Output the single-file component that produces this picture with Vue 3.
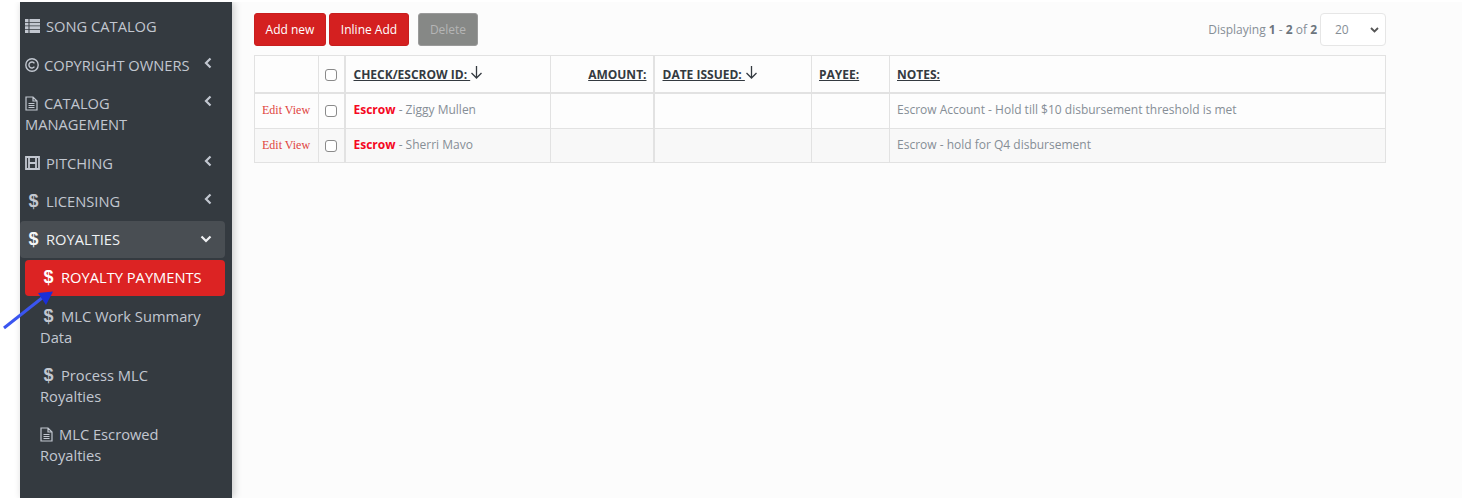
<template>
  <div class="page">
    <aside class="sidebar">
      <div v-for="item in navTop" :key="item.label" class="nav">
        <span class="label">
          <svg v-if="item.icon === 'list'" class="ic wide" width="15" height="14" viewBox="0 0 15 14"><path d="M0 0h3.500v3H0zM4.500 0H15v3H4.500zM0 3.700h3.500v2.800H0zM4.500 3.700H15v2.800H4.500zM0 7.200h3.500V10H0zM4.500 7.200H15V10H4.500zM0 10.800h3.500V14H0zM4.500 10.800H15V14H4.500z" fill="#c2c7d0"/></svg>
          <svg v-else-if="item.icon === 'copy'" class="ic" width="14" height="14" viewBox="0 0 14 14"><circle cx="7" cy="7" r="6.200" fill="none" stroke="#c2c7d0" stroke-width="1.400"/><path d="M9.400 5.300A3 3 0 1 0 9.400 8.700" fill="none" stroke="#c2c7d0" stroke-width="1.400"/></svg>
          <svg v-else-if="item.icon === 'file'" class="ic fileic" width="13" height="15" viewBox="0 0 13 15"><path d="M1 1h7l4 4v9H1zM8 1v4h4M3.500 7.500h6M3.500 9.500h6M3.500 11.500h6" fill="none" stroke="#c2c7d0" stroke-width="1.200"/></svg>
          <svg v-else-if="item.icon === 'film'" class="ic wide" width="15" height="14" viewBox="0 0 15 14"><path d="M1 1h13v12H1zM4 1v12M11 1v12M4 7h7" fill="none" stroke="#c2c7d0" stroke-width="1.800"/></svg>
          <span v-else class="dollar">$</span>
          <span>{{ item.label }}</span>
        </span>
        <svg v-if="item.arrow" class="chev" width="8" height="12" viewBox="0 0 8 12"><path d="M6.500 1.500 2 6l4.500 4.500" fill="none" stroke="#c2c7d0" stroke-width="2.200"/></svg>
      </div>
      <div class="nav open">
        <span class="label"><span class="dollar">$</span><span>ROYALTIES</span></span>
        <svg class="down" width="12" height="8" viewBox="0 0 12 8"><path d="M1.500 1.500 6 6l4.500-4.500" fill="none" stroke="#f0f1f3" stroke-width="2.200"/></svg>
      </div>
      <div class="sub active"><span class="dollar">$</span><span>ROYALTY PAYMENTS</span></div>
      <div class="sub"><span class="dollar">$</span><span>MLC Work Summary Data</span></div>
      <div class="sub"><span class="dollar">$</span><span>Process MLC Royalties</span></div>
      <div class="sub"><svg class="ic subfile" width="13" height="15" viewBox="0 0 13 15"><path d="M1 1h7l4 4v9H1zM8 1v4h4M3.500 7.500h6M3.500 9.500h6M3.500 11.500h6" fill="none" stroke="#c2c7d0" stroke-width="1.200"/></svg><span>MLC Escrowed Royalties</span></div>
    </aside>

    <main class="main">
      <div class="toolbar">
        <div class="buttons">
          <button class="btn red">Add new</button>
          <button class="btn red">Inline Add</button>
          <button class="btn gray">Delete</button>
        </div>
        <div class="paging">
          <span>Displaying <b>1</b> - <b>2</b> of <b>2</b></span>
          <div class="select"><span>20</span><svg width="9" height="6" viewBox="0 0 9 6"><path d="M1 1l3.500 3.500L8 1" fill="none" stroke="#555" stroke-width="1.800"/></svg></div>
        </div>
      </div>
      <table class="grid">
        <colgroup>
          <col class="c1"><col class="c2"><col class="c3"><col class="c4"><col class="c5"><col class="c6"><col>
        </colgroup>
        <thead>
          <tr>
            <th></th>
            <th class="ck thick"><span class="box"></span></th>
            <th class="after"><span class="head">CHECK/ESCROW ID: <svg width="13" height="13" viewBox="0 0 13 13"><path d="M6.500 0v12M1.500 7l5 5 5-5" fill="none" stroke="#343a40" stroke-width="1.300"/></svg></span></th>
            <th class="right thick"><span class="head">AMOUNT:</span></th>
            <th class="after"><span class="head">DATE ISSUED: <svg width="13" height="13" viewBox="0 0 13 13"><path d="M6.500 0v12M1.500 7l5 5 5-5" fill="none" stroke="#343a40" stroke-width="1.300"/></svg></span></th>
            <th><span class="head">PAYEE:</span></th>
            <th><span class="head">NOTES:</span></th>
          </tr>
        </thead>
        <tbody>
          <tr v-for="row in rows" :key="row.name">
            <td class="links">Edit View</td>
            <td class="ck thick"><span class="box"></span></td>
            <td class="after"><b class="esc">Escrow</b> - {{ row.name }}</td>
            <td class="thick"></td>
            <td></td>
            <td></td>
            <td>{{ row.notes }}</td>
          </tr>
        </tbody>
      </table>
    </main>

    <svg class="pointer" width="56" height="44" viewBox="0 0 56 44"><path d="M4 41 42 11" stroke="#3a55f0" stroke-width="3" fill="none"/><path d="M53 4.500 38 6l8 12z" fill="#1a2fd8"/></svg>
  </div>
</template>

<script setup>
const navTop = [
  { label: 'SONG CATALOG', icon: 'list' },
  { label: 'COPYRIGHT OWNERS', icon: 'copy', arrow: true },
  { label: 'CATALOG MANAGEMENT', icon: 'file', arrow: true },
  { label: 'PITCHING', icon: 'film', arrow: true },
  { label: 'LICENSING', icon: 'dollarTxt', arrow: true }
]
const rows = [
  { name: 'Ziggy Mullen', notes: 'Escrow Account - Hold till $10 disbursement threshold is met' },
  { name: 'Sherri Mavo', notes: 'Escrow - hold for Q4 disbursement' }
]
</script>

<style>
html, body { margin: 0; background: #fff; }
</style>

<style scoped>
.page {
  position: relative;
  display: flex;
  height: 496px;
  margin-top: 2px;
  padding-left: 20px;
  overflow: hidden;
  font-family: "Open Sans", "Noto Sans", sans-serif;
  font-size: 14px;
  color: #6c757d;
}
.sidebar {
  box-sizing: border-box;
  width: 212px;
  flex: none;
  background: #343a40;
  padding: 6.400px 7px 0 0;
  box-shadow: 2px 0 8px rgba(0, 0, 0, .2);
  z-index: 1;
  color: #c2c7d0;
  font-size: 14.7px;
}
.nav {
  position: relative;
  padding: 8px 30px 8px 5px;
  line-height: 21px;
  margin-bottom: 1.400px;
  border-radius: 4px;
}
.nav .label { display: block; }
.ic { vertical-align: -1px; margin-right: 5px; }
.ic.wide { margin-right: 6px; }
.ic.fileic { margin-right: 6px; vertical-align: -2px; }
.dollar {
  display: inline-block;
  width: 17px;
  text-align: center;
  font: bold 18px/21px "Liberation Sans", sans-serif;
  margin-right: 4px;
  color: #c2c7d0;
}
.chev { position: absolute; right: 13px; top: 10px; }
.down { position: absolute; right: 13px; top: 14px; }
.open { background: #494e53; color: #eef0f2; height: 21px; margin-bottom: 2px; }
.open .dollar { color: #f4f5f6; }
.sub {
  box-sizing: border-box;
  padding: 8px 20px 8px 15px;
  margin: 0 0 1.200px 5px;
  line-height: 21px;
  border-radius: 4px;
  width: 200px;
}
.active { background: #dc2323; color: #fff; height: 36px; white-space: nowrap; padding-top: 7px; }
.active .dollar { color: #fff; }
.subfile { margin-right: 6px; vertical-align: -2px; }
.main {
  flex: 1;
  min-width: 0;
  background: #fcfcfc;
  padding: 11px 76px 0 22px;
}
.toolbar { display: flex; justify-content: space-between; align-items: flex-start; height: 42px; }
.buttons { display: flex; gap: 3px; }
.btn {
  box-sizing: border-box;
  height: 33px;
  border: 1px solid #c9c9c9;
  border-radius: 3px;
  padding: 0;
  width: 80px;
  font: 12px "Open Sans", sans-serif;
  color: #fff;
}
.btn:first-child { width: 72px; }
.red { background: #d42020; border-color: #c81e1e; }
.gray { background: #868886; color: #b5b5b5; width: 60px; margin-left: 6px; border-color: #9a9a9a; }
.paging { display: flex; align-items: center; gap: 3px; font-size: 12px; color: #868e96; height: 33px; }
.paging b { color: #6c757d; }
.select {
  box-sizing: border-box;
  display: flex;
  align-items: center;
  justify-content: space-between;
  width: 66px;
  height: 33px;
  padding: 0 6px 0 14px;
  background: #fff;
  border: 1px solid #e6e6e6;
  border-radius: 4px;
  color: #868e96;
}
.grid {
  width: 1132px;
  table-layout: fixed;
  border-collapse: collapse;
  font-size: 12px;
  color: #868e96;
  background: #fdfdfd;
}
.c1 { width: 64px; }
.c2 { width: 26px; }
.c3 { width: 206px; }
.c4 { width: 103px; }
.c5 { width: 158px; }
.c6 { width: 78px; }
th, td {
  border: 1px solid #e2e2e2;
  padding: 0 7px;
  text-align: left;
  overflow: hidden;
  white-space: nowrap;
}
th { height: 36px; color: #343a40; font-weight: 700; font-size: 12px; border-bottom-width: 2px; }
td { height: 31px; padding-bottom: 3px; }
tbody tr:nth-child(2) { background: #f8f8f8; }
tbody tr:nth-child(2) td { height: 30px; }
.thick { border-right-width: 2px; }
th.after, td.after { padding-left: 8px; }
.head { text-decoration: underline; }
.head svg { vertical-align: 0; }
th.right { text-align: right; padding-right: 6px; }
.ck { text-align: center; padding: 0 1px 0 0; }
td.ck { text-align: center; padding: 0 1px 2px 0; }
td.links { padding-bottom: 1px; }
.box {
  display: inline-block;
  box-sizing: border-box;
  width: 12px;
  height: 12px;
  border: 1px solid #8a8a8a;
  border-radius: 3px;
  background: #fff;
  vertical-align: middle;
}
.links { font-family: "Liberation Serif", serif; color: #e0443e; }
.esc { color: #f5081f; font-weight: 700; }
.pointer { position: absolute; left: 0; top: 285px; z-index: 2; pointer-events: none; }
</style>
